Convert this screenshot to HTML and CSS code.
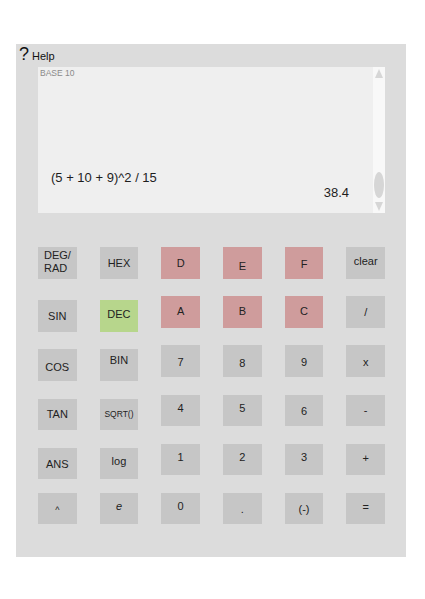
FILE: index.html
```html
<!DOCTYPE html>
<html>
<head>
<meta charset="utf-8">
<link rel="stylesheet" href="styles.css">
</head>
<body>
<div class="page">
  <div class="panel">
    <div class="help"><span class="q">?</span><span class="help-text">Help</span></div>
    <div class="display">
      <div class="screen">
        <div class="base">BASE 10</div>
        <div class="expr">(5 + 10 + 9)^2 / 15</div>
        <div class="result">38.4</div>
      </div>
      <div class="scroll">
        <svg class="arrow-up" width="12" height="12" viewBox="0 0 12 12"><polygon points="2,10 10,10 6,1" fill="#d6d6d6"/></svg>
        <div class="thumb"></div>
        <svg class="arrow-down" width="12" height="11" viewBox="0 0 12 11"><polygon points="2,1 10,1 6,10" fill="#d6d6d6"/></svg>
      </div>
    </div>
    <div class="keys">
      <div class="key degrad"><span>DEG/<br>RAD</span></div>
      <div class="key">HEX</div>
      <div class="key red">D</div>
      <div class="key red dn3">E</div>
      <div class="key red dn1">F</div>
      <div class="key up2">clear</div>

      <div class="key low">SIN</div>
      <div class="key low green up2">DEC</div>
      <div class="key red up1">A</div>
      <div class="key red up1">B</div>
      <div class="key red up1">C</div>
      <div class="key">/</div>

      <div class="key low dn2">COS</div>
      <div class="key low up5">BIN</div>
      <div class="key dn1">7</div>
      <div class="key dn2">8</div>
      <div class="key dn1">9</div>
      <div class="key dn1">x</div>

      <div class="key low">TAN</div>
      <div class="key low small">SQRT()</div>
      <div class="key up2">4</div>
      <div class="key up2">5</div>
      <div class="key dn1">6</div>
      <div class="key">-</div>

      <div class="key low">ANS</div>
      <div class="key low up3">log</div>
      <div class="key up3">1</div>
      <div class="key up3">2</div>
      <div class="key up3">3</div>
      <div class="key up2">+</div>

      <div class="key caret">^</div>
      <div class="key italic up3">e</div>
      <div class="key up3">0</div>
      <div class="key">.</div>
      <div class="key">(-)</div>
      <div class="key up2">=</div>
    </div>
  </div>
</div>
</body>
</html>
```
FILE: styles.css
```css
* { box-sizing: border-box; }
body {
  margin: 0;
  background: #ffffff;
  font-family: "Liberation Sans", Arial, sans-serif;
  color: #222;
}
.page {
  padding: 44px 0 0 16px;
}
.panel {
  width: 390px;
  height: 513px;
  background: #dcdcdc;
}
.help {
  height: 23px;
  display: flex;
  align-items: baseline;
  padding-left: 3px;
  padding-top: 0;
  line-height: 20px;
}
.q {
  font-size: 18px;
  color: #111;
}
.help-text {
  font-size: 11px;
  margin-left: 3px;
  color: #111;
}
.display {
  margin-left: 22px;
  width: 347px;
  height: 146px;
  background: #efefef;
  display: flex;
}
.screen {
  flex: 1;
  display: flex;
  flex-direction: column;
  padding: 1px 24px 13px 2px;
}
.base {
  font-size: 8.5px;
  color: #8a8a8a;
  line-height: 10px;
  margin-bottom: auto;
}
.expr {
  font-size: 13px;
  line-height: 15px;
  margin-left: 11px;
  color: #1e1e1e;
}
.result {
  font-size: 13px;
  line-height: 15px;
  text-align: right;
  color: #1e1e1e;
}
.scroll {
  width: 12px;
  background: #f8f8f8;
  display: flex;
  flex-direction: column;
  align-items: center;
}
.arrow-up { margin-top: 1px; display: block; }
.thumb {
  margin-top: auto;
  width: 10px;
  height: 26px;
  border-radius: 50%;
  background: #d6d6d6;
}
.arrow-down { margin-top: 3px; margin-bottom: 1px; display: block; }
.keys {
  margin-top: 34px;
  margin-left: 22px;
  display: grid;
  grid-template-columns: repeat(6, 38.5px);
  column-gap: 23.2px;
  grid-auto-rows: 49.2px;
}
.key {
  height: 31.5px;
  background: #c6c6c6;
  display: flex;
  align-items: center;
  justify-content: center;
  font-size: 11px;
  color: #222;
}
.key.red { background: #cf9c9c; }
.key.green { background: #b7d68c; }
.key.low { margin-top: 4px; }
.key.degrad {
  justify-content: flex-start;
  align-items: flex-start;
  padding: 2px 0 0 6px;
  line-height: 13px;
}
.key.small { font-size: 8.5px; }
.key.italic { font-style: italic; }
.key.caret { font-size: 9px; padding-top: 2px; }
.up1 { padding-bottom: 2px; }
.up2 { padding-bottom: 4px; }
.up3 { padding-bottom: 6px; }
.up5 { padding-bottom: 10px; }
.dn1 { padding-top: 2px; }
.dn2 { padding-top: 4px; }
.dn3 { padding-top: 6px; }
```
